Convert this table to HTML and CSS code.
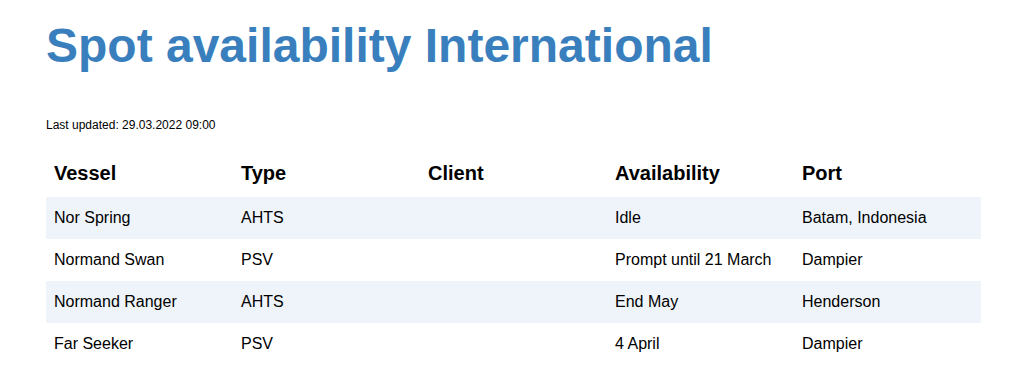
FILE: index.html
```html
<!DOCTYPE html>
<html lang="en">
<head>
    <meta charset="UTF-8">
    <meta name="viewport" content="width=device-width, initial-scale=1.0">
    <title>Spot availability International</title>
    <link rel="stylesheet" href="styles.css">
</head>
<body>
    <div class="spot-container">
        <h1>Spot availability International</h1>
        <p class="updated">Last updated: 29.03.2022 09:00</p>

        <table class="spot-table">
            <thead>
                <tr>
                    <th>Vessel</th>
                    <th>Type</th>
                    <th>Client</th>
                    <th>Availability</th>
                    <th>Port</th>
                </tr>
            </thead>
            <tbody>
                <tr>
                    <td>Nor Spring</td>
                    <td>AHTS</td>
                    <td></td>
                    <td>Idle</td>
                    <td>Batam, Indonesia</td>
                </tr>
                <tr>
                    <td>Normand Swan</td>
                    <td>PSV</td>
                    <td></td>
                    <td>Prompt until 21 March</td>
                    <td>Dampier</td>
                </tr>
                <tr>
                    <td>Normand Ranger</td>
                    <td>AHTS</td>
                    <td></td>
                    <td>End May</td>
                    <td>Henderson</td>
                </tr>
                <tr>
                    <td>Far Seeker</td>
                    <td>PSV</td>
                    <td></td>
                    <td>4 April</td>
                    <td>Dampier</td>
                </tr>
            </tbody>
        </table>
    </div>
</body>
</html>
```

FILE: styles.css
```css
body {
    font-family: "Liberation Sans", Arial, sans-serif;
    background-color: #ffffff;
    color: #000;
    margin: 0;
    padding: 0;
}
.spot-container {
    padding: 18px 34px 0 46px;
}
.spot-container h1 {
    color: #3a7fbd;
    font-size: 48px;
    font-weight: bold;
    margin: 0;
}
.updated {
    font-size: 12px;
    margin: 45px 0 18px;
}
.spot-table {
    width: 935px;
    border-collapse: collapse;
    table-layout: fixed;
}
.spot-table th,
.spot-table td {
    text-align: left;
    padding: 12px 8px;
}
.spot-table th {
    font-size: 20px;
    font-weight: bold;
}
.spot-table td {
    font-size: 16px;
}
.spot-table tbody tr:nth-child(odd) {
    background: #eff4fa;
}
```
